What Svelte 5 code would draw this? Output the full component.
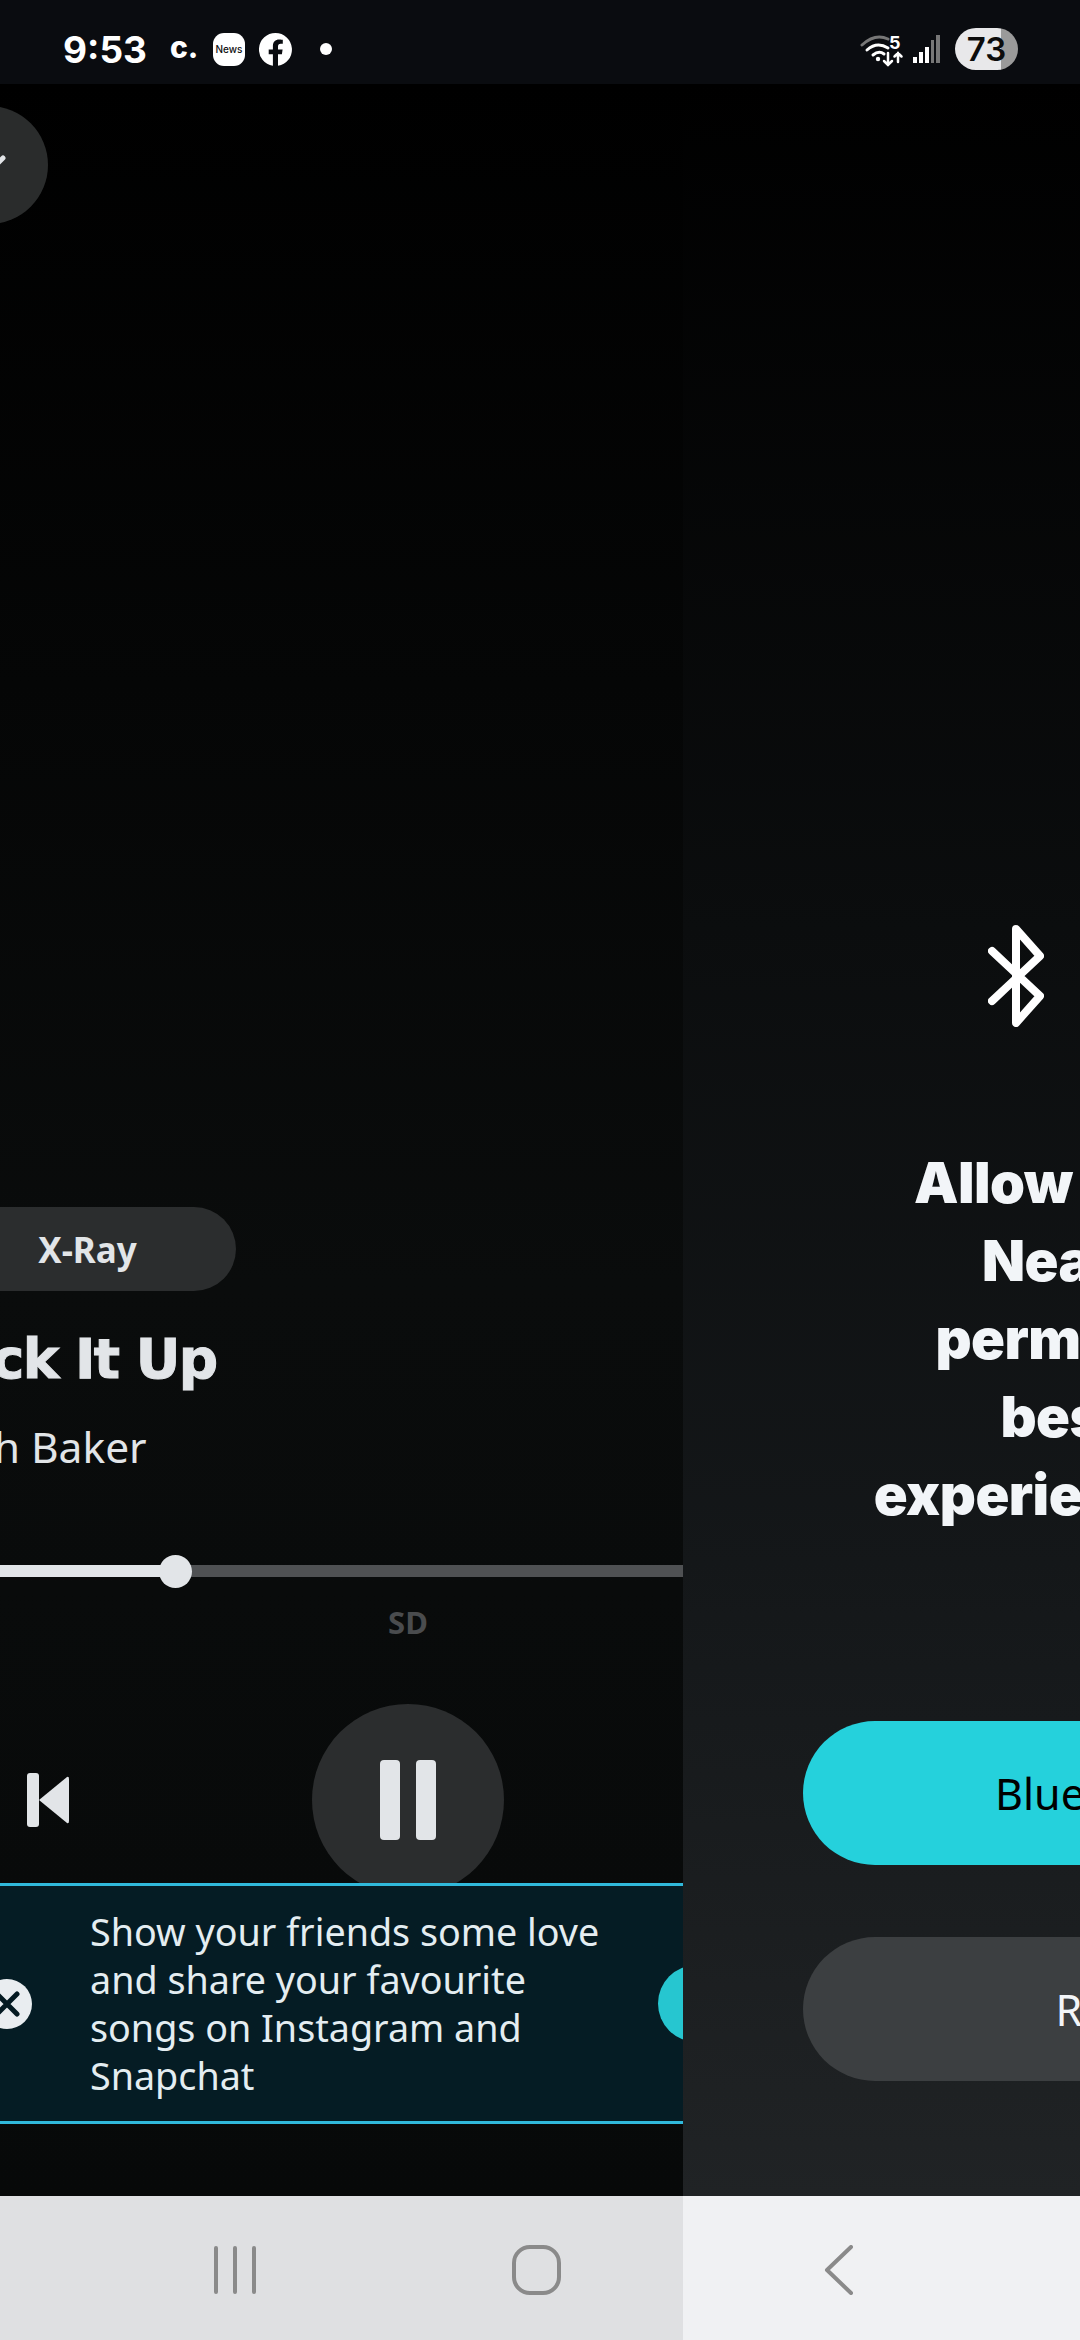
<script>
    const lines = ['Show your friends some love', 'and share your favourite', 'songs on Instagram and', 'Snapchat'];
    const heading = ['Allow Bluetooth scans', 'Nearby devices &', 'permissions for your', 'best of listening', 'experience in your phone'];
</script>

<div class="screen">
    <header class="status">
        <div class="status-left">
            <span class="time">9:53</span>
            <span class="carrier">c.</span>
            <span class="news">News</span>
            <svg class="fb" viewBox="0 0 33 33" width="33" height="33">
                <path fill="#fff" d="M16.5 0a16.5 16.5 0 0 0-2.6 32.8V21.2H9.7v-4.7h4.2v-3.6c0-4.1 2.5-6.4 6.2-6.4 1.8 0 3.7.3 3.7.3v4h-2.1c-2 0-2.7 1.3-2.7 2.6v3.1h4.6l-.7 4.7h-3.900v11.600A16.5 16.5 0 0 0 16.5 0z"/>
            </svg>
            <span class="dot"></span>
        </div>
        <div class="status-right">
            <svg viewBox="860 30 82 38" width="82" height="38">
                <g fill="none" stroke-linecap="round">
                    <path d="M862 45Q875 33 888 39" stroke="#777" stroke-width="3"/>
                    <path d="M867 50Q877 41 888 48" stroke="#fff" stroke-width="3"/>
                    <path d="M873 55Q879 50 884 54" stroke="#fff" stroke-width="3"/>
                    <path d="M888 53V65M884 61l4 4 4-4M898 62V53M894.500 56.500l3.500-3.500 3.500 3.500" stroke="#fff" stroke-width="2.500"/>
                </g>
                <circle cx="878" cy="59" r="2.200" fill="#fff"/>
                <text x="889" y="49" class="five">5</text>
                <rect x="913" y="57" width="4" height="6" fill="#fff"/>
                <rect x="919" y="52" width="4" height="11" fill="#fff"/>
                <rect x="925" y="47" width="4" height="16" fill="#fff"/>
                <rect x="931" y="40" width="3" height="23" fill="#777"/>
                <rect x="936" y="35" width="4" height="28" fill="#777"/>
            </svg>
            <span class="battery">73</span>
        </div>
    </header>

    <main class="stage">
        <section class="player">
            <button class="back" aria-label="Back">
                <svg viewBox="0 0 118 118" width="118" height="118">
                    <path d="M45 52l14 14 14-14" fill="none" stroke="#e2e5e8" stroke-width="5" stroke-linecap="round" stroke-linejoin="round"/>
                </svg>
            </button>

            <div class="info">
                <div class="xray">X-Ray</div>
                <h1>Pick It Up</h1>
                <p class="artist">Josh Baker</p>
            </div>

            <div class="track"><div class="fill"><span class="thumb"></span></div></div>
            <div class="sd">SD</div>

            <div class="controls">
                <svg class="prev" viewBox="0 0 42 54" width="42" height="54">
                    <rect width="12" height="54" rx="3" fill="#e2e5e8"/>
                    <path d="M12 27L40 4q2-1 2 2v42q0 3-2 2z" fill="#e2e5e8"/>
                </svg>
                <div class="pause"><span></span><span></span></div>
            </div>

            <div class="banner">
                <svg class="close" viewBox="0 0 50 50" width="50" height="50">
                    <circle cx="25" cy="25" r="25" fill="#e9edf0"/>
                    <path d="M15 15l20 20M35 15L15 35" stroke="#041a22" stroke-width="5" stroke-linecap="round"/>
                </svg>
                <p>{#each lines as line}<span>{line}</span>{/each}</p>
                <button class="share">Share</button>
            </div>
        </section>

        <section class="permission">
            <svg class="bt" viewBox="0 0 56 102" width="56" height="102">
                <path d="M4 26l48 45-24 27V4l24 27L4 76" fill="none" stroke="#fff" stroke-width="8" stroke-linecap="round" stroke-linejoin="round"/>
            </svg>
            <h2>{#each heading as line}<span>{line}</span>{/each}</h2>
            <div class="actions">
                <button class="primary">Bluetooth permissions</button>
                <button class="secondary">Remind me later</button>
            </div>
        </section>
    </main>

    <nav class="nav">
        <svg viewBox="0 0 42 50" width="42" height="50"><path d="M2 3v44M21 3v44M40 3v44" stroke="#8a8a8a" stroke-width="4" stroke-linecap="round"/></svg>
        <svg viewBox="0 0 50 50" width="50" height="50"><rect x="2" y="2" width="45" height="46" rx="16" fill="none" stroke="#8a8a8a" stroke-width="4"/></svg>
        <svg viewBox="0 0 30 50" width="30" height="50"><path d="M27 2L3 25l24 23" fill="none" stroke="#8a8a8a" stroke-width="4" stroke-linecap="round" stroke-linejoin="round"/></svg>
    </nav>
</div>

<style>
    :global(body) {
        margin: 0;
        background: #000;
    }

    .screen {
        width: 1080px;
        height: 2340px;
        overflow: hidden;
        display: flex;
        flex-direction: column;
        font-family: "Noto Sans", sans-serif;
    }

    button {
        border: none;
        padding: 0;
        font: inherit;
    }

    .status {
        height: 84px;
        flex: none;
        background: #0a0c10;
        display: flex;
        justify-content: space-between;
        align-items: center;
        color: #fff;
        padding: 14px 62px 0 63px;
        box-sizing: border-box;
    }

    .status-left, .status-right {
        display: flex;
        align-items: center;
    }

    .time {
        font: 700 37px Inter, sans-serif;
        width: 107px;
    }

    .carrier {
        font: 800 30px Inter, sans-serif;
        width: 43px;
        margin-bottom: 4px;
    }

    .news {
        width: 32px;
        height: 33px;
        border-radius: 11px;
        background: #fff;
        color: #111;
        font: 500 10px Inter, sans-serif;
        display: flex;
        align-items: center;
        justify-content: center;
        margin-right: 14px;
    }

    .dot {
        width: 12px;
        height: 12px;
        border-radius: 50%;
        background: #fff;
        margin-left: 28px;
    }

    .five {
        font: 700 18px Inter, sans-serif;
        fill: #fff;
    }

    .battery {
        width: 63px;
        height: 42px;
        margin-left: 13px;
        border-radius: 21px;
        background: linear-gradient(90deg, #e8e8ea 46px, #9a9a9a 46px);
        color: #0c0c0c;
        font: 600 33px Inter, sans-serif;
        display: flex;
        align-items: center;
        justify-content: center;
    }

    .stage {
        flex: 1;
        position: relative;
        min-height: 0;
    }

    /* old page is mid-transition, so it starts off screen */
    .player {
        width: 1080px;
        height: 100%;
        margin-left: -132px;
        display: flex;
        flex-direction: column;
        background: linear-gradient(180deg, #000 0, #0a0c0c 1200px, #070909 100%);
        color: #e2e5e8;
    }

    .back {
        width: 118px;
        height: 118px;
        flex: none;
        border-radius: 50%;
        background: #2a2c2c;
        margin: 22px 0 0 62px;
    }

    .info {
        padding-left: 68px;
        margin-top: 983px;
    }

    .xray {
        width: 297px;
        height: 84px;
        padding-left: 3px;
        border-radius: 42px;
        background: #2b2d2e;
        font: 700 35px "Noto Sans", sans-serif;
        display: flex;
        align-items: center;
        justify-content: center;
    }

    h1 {
        margin: 36px 0 0;
        font: 700 55px/64px "DejaVu Sans", sans-serif;
        letter-spacing: -1.700px;
        -webkit-text-stroke: 1px currentColor;
    }

    .artist {
        margin: 27px 0 0;
        font-size: 42.500px;
        line-height: 57px;
    }

    .track {
        height: 12px;
        background: #4f5153;
        margin-top: 90px;
        flex: none;
    }

    .fill {
        width: 308px;
        height: 12px;
        background: #e2e5e8;
        position: relative;
    }

    .thumb {
        position: absolute;
        right: -16px;
        top: -10px;
        width: 33px;
        height: 33px;
        border-radius: 50%;
        background: #e2e5e8;
    }

    .sd {
        text-align: center;
        font: 700 31px/40px "Noto Sans", sans-serif;
        color: #4a4c4e;
        margin-top: 25px;
    }

    .controls {
        height: 179px;
        margin-top: 62px;
        position: relative;
        display: flex;
        justify-content: center;
        overflow: hidden;
        flex: none;
    }

    .prev {
        position: absolute;
        left: 159px;
        top: 69px;
    }

    .pause {
        width: 192px;
        height: 192px;
        flex: none;
        border-radius: 50%;
        background: #2b2d2e;
        display: flex;
        justify-content: center;
        align-items: center;
        gap: 16px;
    }

    .pause span {
        width: 20px;
        height: 80px;
        border-radius: 4px;
        background: #e2e5e8;
    }

    .banner {
        height: 241px;
        box-sizing: border-box;
        flex: none;
        background: #051c24;
        border-top: 3px solid #30b9db;
        border-bottom: 3px solid #30b9db;
        display: flex;
        align-items: center;
        padding-left: 114px;
        position: relative;
    }

    .banner p {
        margin: 0 0 0 58px;
        font-size: 37.700px;
        line-height: 48px;
        color: #e4edf1;
    }

    .banner p span {
        display: block;
        white-space: nowrap;
    }

    .share {
        position: absolute;
        left: 790px;
        top: 79px;
        width: 220px;
        height: 77px;
        border-radius: 39px;
        background: #26c6d0;
        color: #041a22;
    }

    .permission {
        position: absolute;
        left: 683px;
        top: 0;
        bottom: 0;
        width: 1080px;
        background: linear-gradient(180deg, #000 0, #0b0d0e 40%, #141719 70%, #202325 100%);
        color: #f2f5f8;
        display: flex;
        flex-direction: column;
    }

    .bt {
        margin: 841px 0 0 305px;
        flex: none;
    }

    h2 {
        margin: 117px 0 0;
        font: 900 56px/78px Inter, sans-serif;
        letter-spacing: -0.500px;
        text-align: center;
    }

    h2 span {
        display: block;
        white-space: nowrap;
    }

    .actions {
        margin: 0 120px;
        position: absolute;
        top: 1637px;
        left: 0;
        right: 0;
        display: flex;
        flex-direction: column;
        gap: 72px;
    }

    .actions button {
        height: 144px;
        border-radius: 72px;
        font-size: 43px;
    }

    .primary {
        background: #25d1dc;
        color: #000;
    }

    .secondary {
        background: #3c3f41;
        color: #f2f5f8;
    }

    .nav {
        height: 144px;
        flex: none;
        box-sizing: border-box;
        background: linear-gradient(90deg, #dfe0e2 683px, #f0f1f3 683px);
        display: grid;
        grid-template-columns: repeat(3, 302px);
        justify-items: center;
        align-items: center;
        padding: 4px 0 0 84px;
    }
</style>
